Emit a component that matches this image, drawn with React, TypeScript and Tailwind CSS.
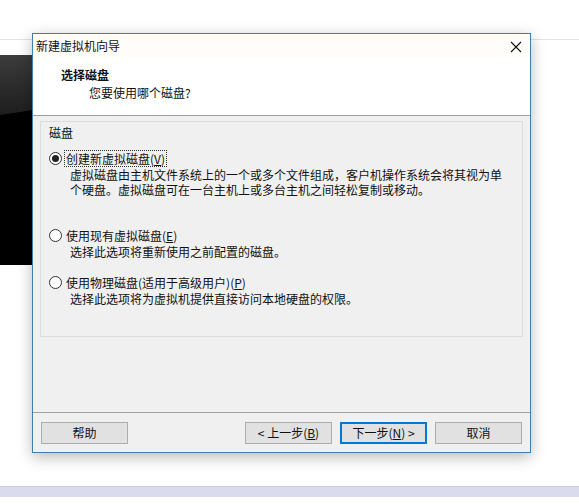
import React from 'react';

const font = { fontFamily: '"Noto Sans CJK SC", "Microsoft YaHei", sans-serif' };

interface OptionProps {
  label: string;
  hotkey: string;
  tail?: string;
  lines: string[];
  checked?: boolean;
  className?: string;
}

const Radio: React.FC<{ checked?: boolean }> = ({ checked }) => (
  <span className="w-[13px] h-[13px] rounded-full border border-[#333] bg-white flex items-center justify-center shrink-0">
    {checked && <span className="w-[7px] h-[7px] rounded-full bg-[#222]" />}
  </span>
);

const Option: React.FC<OptionProps> = ({ label, hotkey, tail = ')', lines, checked, className }) => (
  <div className={className}>
    <div className="flex items-center gap-[3px] h-[16px]">
      <Radio checked={checked} />
      <span className={'leading-[15px] px-[1px] ' + (checked ? 'outline outline-1 outline-dotted outline-[#333]' : '')}>
        {label}(<span className="underline">{hotkey}</span>{tail}
      </span>
    </div>
    <div className="pl-[21px] mt-[1px] leading-[15px]">
      {lines.map((l) => (
        <div key={l} className="h-[15px] leading-[15px]">{l}</div>
      ))}
    </div>
  </div>
);

const Button: React.FC<{ children: React.ReactNode; primary?: boolean }> = ({ children, primary }) => (
  <button
    className={
      'w-[87px] h-[22px] bg-[#e1e1e1] text-[12px] text-[#111] leading-none flex items-center justify-center ' +
      (primary ? 'border-2 border-[#0078d7]' : 'border border-[#adadad]')
    }
  >
    {children}
  </button>
);

export default function App() {
  return (
    <div className="relative w-[579px] h-[504px] bg-white overflow-hidden text-[12px] text-[#111]" style={font}>
      {/* background window behind the dialog */}
      <div className="absolute left-0 top-[39px] w-[579px] h-[1px] bg-[#e3e3e3]" />
      <div className="absolute left-0 top-[55px] w-[40px] h-[210px] bg-black overflow-hidden">
        <div className="absolute left-0 top-0 w-[60px] h-[60px] bg-gradient-to-b from-[#3c3c3c] to-[#1e1e1e] [clip-path:polygon(0_0,100%_0,100%_85%,0_100%)]" />
      </div>
      <div className="absolute left-0 top-[486px] w-[579px] h-[1px] bg-[#c9c9d6]" />
      <div className="absolute left-0 top-[487px] w-[579px] h-[10px] bg-[#dadced]" />

      {/* dialog */}
      <div className="absolute left-[32px] top-[33px] w-[499px] h-[420px] border border-[#3d7fb5] bg-[#f0f0f0] flex flex-col shadow-[0_4px_14px_rgba(0,0,0,0.28)]">
        <div className="h-[24px] bg-[#fffdfa] flex items-center justify-between pl-[3px] pr-[8px]">
          <span className="text-[12px]">新建虚拟机向导</span>
          <svg width="12" height="12" viewBox="0 0 12 12" className="mt-[2px]">
            <path d="M1 1 L11 11 M11 1 L1 11" stroke="#111" strokeWidth="1.1" />
          </svg>
        </div>
        <div className="h-[58px] bg-white border-b border-[#a0a0a0] pt-[9px]">
          <div className="pl-[28px] font-bold leading-[16px]">选择磁盘</div>
          <div className="pl-[56px] mt-[2px] leading-[16px]">您要使用哪个磁盘?</div>
        </div>
        <div className="flex-1 px-[7px] pt-[5px]">
          <div className="h-[216px] border border-[#dcdcdc] pl-[8px] pt-[3px]">
            <div className="leading-[16px]">磁盘</div>
            <Option
              className="mt-[9px]"
              checked
              label="创建新虚拟磁盘"
              hotkey="V"
              lines={[
                '虚拟磁盘由主机文件系统上的一个或多个文件组成，客户机操作系统会将其视为单',
                '个硬盘。虚拟磁盘可在一台主机上或多台主机之间轻松复制或移动。',
              ]}
            />
            <Option
              className="mt-[30px]"
              label="使用现有虚拟磁盘"
              hotkey="E"
              lines={['选择此选项将重新使用之前配置的磁盘。']}
            />
            <Option
              className="mt-[15px]"
              label="使用物理磁盘(适用于高级用户)"
              hotkey="P"
              lines={['选择此选项将为虚拟机提供直接访问本地硬盘的权限。']}
            />
          </div>
        </div>
        <div className="h-[40px] border-t border-[#a0a0a0] flex items-start pt-[9px] pl-[8px] pr-[8px]">
          <Button>帮助</Button>
          <div className="flex-1" />
          <div className="flex gap-[8px]">
            <Button>
              &lt; 上一步(<span className="underline">B</span>)
            </Button>
            <Button primary>
              下一步(<span className="underline">N</span>) &gt;
            </Button>
            <Button>取消</Button>
          </div>
        </div>
      </div>
    </div>
  );
}
